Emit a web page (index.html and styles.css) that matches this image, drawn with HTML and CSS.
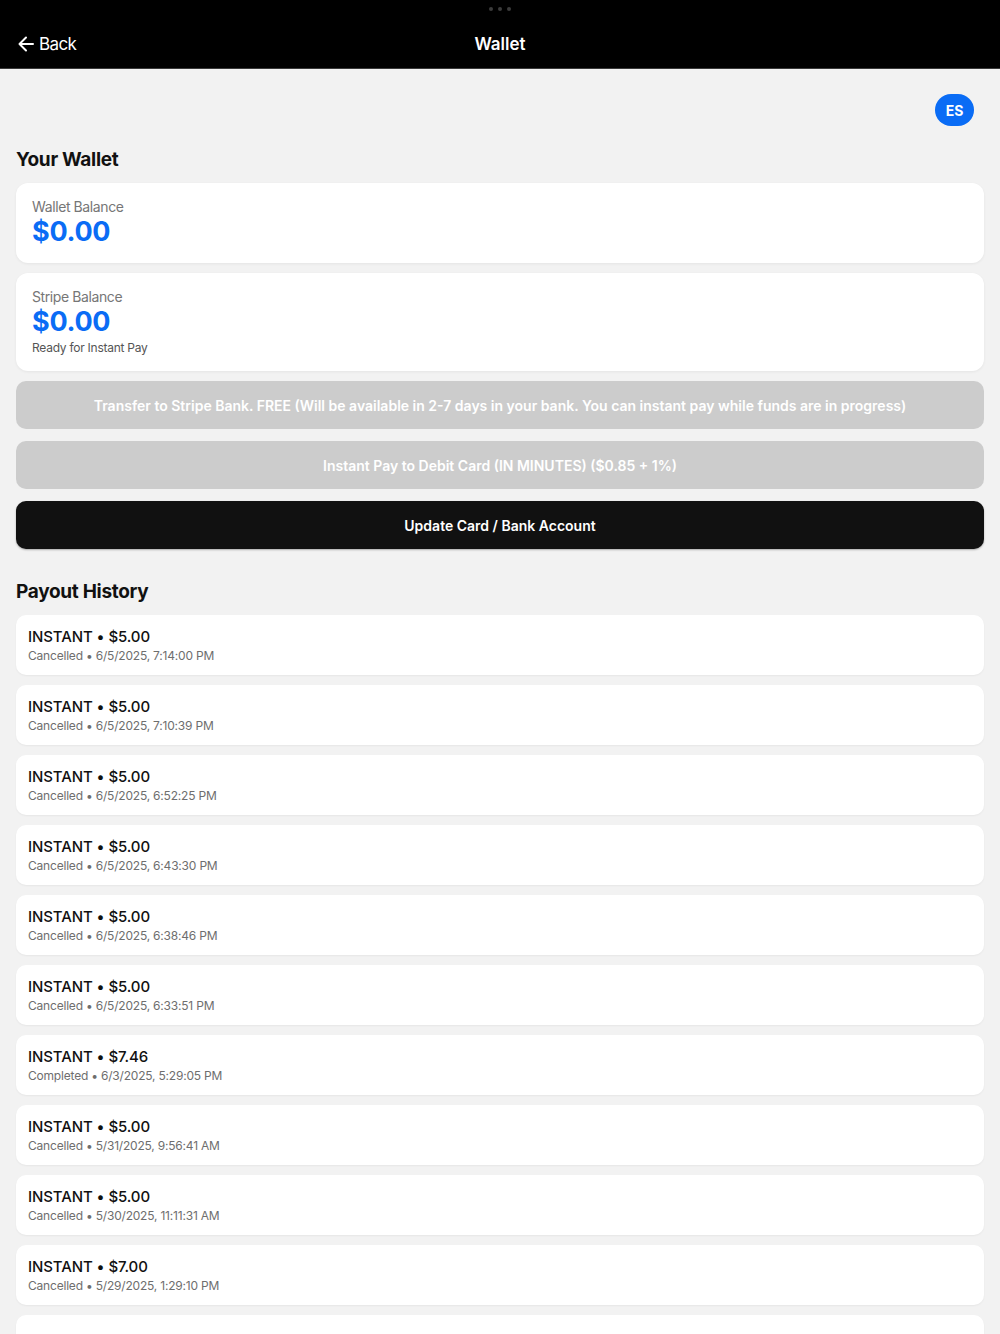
FILE: index.html
```html
<!DOCTYPE html>
<html lang="en">
  <head>
    <meta charset="UTF-8" />
    <meta name="viewport" content="width=device-width, initial-scale=1" />
    <title>Wallet</title>
    <link rel="stylesheet" href="styles.css">
  </head>
  <body>
    <header class="topbar">
      <div class="grabber"><span></span><span></span><span></span></div>
      <a class="back" href="#">
        <svg width="18" height="18" viewBox="0 0 18 18" fill="none" stroke="#fff" stroke-width="2" stroke-linecap="round" stroke-linejoin="round">
          <path d="M16 9H2.5M9 2.5L2.5 9L9 15.5" />
        </svg>
        <span>Back</span>
      </a>
      <h1 class="title">Wallet</h1>
    </header>

    <main class="content">
      <div class="avatar-row">
        <div class="avatar">ES</div>
      </div>

      <h2 class="section-title">Your Wallet</h2>

      <div class="card balance">
        <div class="label">Wallet Balance</div>
        <div class="amount">$0.00</div>
      </div>

      <div class="card balance">
        <div class="label">Stripe Balance</div>
        <div class="amount">$0.00</div>
        <div class="note">Ready for Instant Pay</div>
      </div>

      <button class="btn btn-disabled">Transfer to Stripe Bank. FREE (Will be available in 2-7 days in your bank. You can instant pay while funds are in progress)</button>
      <button class="btn btn-disabled">Instant Pay to Debit Card (IN MINUTES) ($0.85 + 1%)</button>
      <button class="btn btn-dark">Update Card / Bank Account</button>

      <h2 class="section-title history-title">Payout History</h2>

      <ul class="payouts">
        <li class="payout"><div class="p-main">INSTANT • $5.00</div><div class="p-sub">Cancelled • 6/5/2025, 7:14:00 PM</div></li>
        <li class="payout"><div class="p-main">INSTANT • $5.00</div><div class="p-sub">Cancelled • 6/5/2025, 7:10:39 PM</div></li>
        <li class="payout"><div class="p-main">INSTANT • $5.00</div><div class="p-sub">Cancelled • 6/5/2025, 6:52:25 PM</div></li>
        <li class="payout"><div class="p-main">INSTANT • $5.00</div><div class="p-sub">Cancelled • 6/5/2025, 6:43:30 PM</div></li>
        <li class="payout"><div class="p-main">INSTANT • $5.00</div><div class="p-sub">Cancelled • 6/5/2025, 6:38:46 PM</div></li>
        <li class="payout"><div class="p-main">INSTANT • $5.00</div><div class="p-sub">Cancelled • 6/5/2025, 6:33:51 PM</div></li>
        <li class="payout"><div class="p-main">INSTANT • $7.46</div><div class="p-sub">Completed • 6/3/2025, 5:29:05 PM</div></li>
        <li class="payout"><div class="p-main">INSTANT • $5.00</div><div class="p-sub">Cancelled • 5/31/2025, 9:56:41 AM</div></li>
        <li class="payout"><div class="p-main">INSTANT • $5.00</div><div class="p-sub">Cancelled • 5/30/2025, 11:11:31 AM</div></li>
        <li class="payout"><div class="p-main">INSTANT • $7.00</div><div class="p-sub">Cancelled • 5/29/2025, 1:29:10 PM</div></li>
        <li class="payout payout-peek"></li>
      </ul>
    </main>
  </body>
</html>
```

FILE: styles.css
```css
/*—— base ——*/
* {
  box-sizing: border-box;
}

html,
body {
  margin: 0;
  padding: 0;
  height: 1334px;
  overflow: hidden;
}

body {
  background: #f2f2f2;
  font-family: Inter, "Noto Sans", "Liberation Sans", sans-serif;
  color: #111;
}

/*—— top bar ——*/
.topbar {
  position: relative;
  height: 69px;
  background: #000;
  border-bottom: 1px solid #3a3a3a;
  display: flex;
  align-items: center;
  justify-content: center;
  padding-top: 20px;
}

.grabber {
  position: absolute;
  top: 7px;
  left: 0;
  right: 0;
  display: flex;
  justify-content: center;
  gap: 5px;
}
.grabber span {
  width: 4px;
  height: 4px;
  border-radius: 50%;
  background: #3c3c3c;
}

.back {
  position: absolute;
  left: 17px;
  top: 34px;
  display: flex;
  align-items: center;
  gap: 4px;
  color: #fff;
  text-decoration: none;
  font-size: 17px;
  line-height: 20px;
  letter-spacing: -0.6px;
}

.title {
  margin: 0;
  color: #fff;
  font-size: 17px;
  font-weight: 600;
  line-height: 20px;
}

/*—— content ——*/
.content {
  padding: 0 16px;
}

.avatar-row {
  display: flex;
  justify-content: flex-end;
  padding-top: 25px;
  padding-right: 10px;
}

.avatar {
  width: 39px;
  height: 32px;
  border-radius: 16px;
  background: #0a6cf5;
  color: #fff;
  font-size: 14px;
  font-weight: 700;
  display: flex;
  align-items: center;
  justify-content: center;
}

.section-title {
  margin: 22px 0 11px;
  font-size: 19px;
  line-height: 24px;
  font-weight: 700;
  letter-spacing: -0.3px;
}

.history-title {
  margin-top: 31px;
}

/*—— balance cards ——*/
.card {
  background: #fff;
  border-radius: 12px;
  box-shadow: 0 1px 3px rgba(0, 0, 0, 0.06);
}

.balance {
  padding: 15px 16px 15px;
  margin-bottom: 10px;
}

.label {
  font-size: 14px;
  line-height: 18px;
  color: #767676;
  letter-spacing: -0.4px;
}

.amount {
  font-size: 27px;
  line-height: 32px;
  font-weight: 700;
  color: #0a6cf5;
  letter-spacing: -0.3px;
}

.note {
  margin-top: 2px;
  font-size: 12px;
  line-height: 16px;
  color: #555;
  letter-spacing: -0.25px;
}

/*—— buttons ——*/
.btn {
  display: block;
  width: 100%;
  height: 48px;
  margin-bottom: 12px;
  border: none;
  border-radius: 10px;
  font-family: inherit;
  font-size: 14px;
  font-weight: 600;
  color: #fff;
  cursor: pointer;
}

.btn-disabled {
  background: #cccccc;
}

.btn-dark {
  background: #111;
  box-shadow: 0 1px 2px rgba(0, 0, 0, 0.3);
}

/*—— payouts ——*/
.payouts {
  list-style: none;
  margin: 0;
  padding: 0;
  display: flex;
  flex-direction: column;
  gap: 10px;
}

.payout {
  height: 60px;
  padding: 12px 12px 0;
  background: #fff;
  border-radius: 10px;
  box-shadow: 0 1px 2px rgba(0, 0, 0, 0.05);
}

.payout-peek {
  flex: none;
}

.p-main {
  font-size: 15px;
  line-height: 20px;
  font-weight: 500;
  color: #111;
  letter-spacing: -0.1px;
}

.p-sub {
  margin-top: 1px;
  font-size: 12px;
  line-height: 16px;
  color: #6e6e6e;
  letter-spacing: -0.2px;
}
```
